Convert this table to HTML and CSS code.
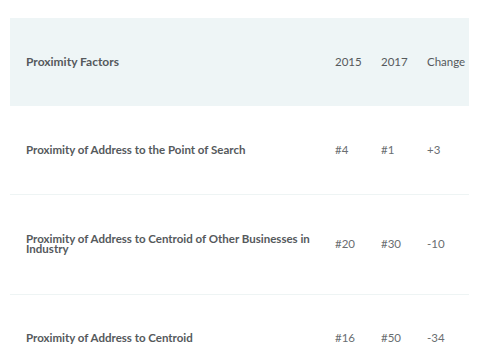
FILE: index.html
```html
<!DOCTYPE html>
<html>
<head>
<meta charset="utf-8">
<link rel="stylesheet" href="styles.css">
</head>
<body>
<table class="factors">
  <colgroup>
    <col class="c-name">
    <col class="c-year">
    <col class="c-year">
    <col class="c-change">
  </colgroup>
  <thead>
    <tr class="head">
      <th class="name">Proximity Factors</th>
      <th>2015</th>
      <th>2017</th>
      <th>Change</th>
    </tr>
  </thead>
  <tbody>
    <tr class="row">
      <td class="name">Proximity of Address to the Point of Search</td>
      <td>#4</td>
      <td>#1</td>
      <td>+3</td>
    </tr>
    <tr class="row tall">
      <td class="name">Proximity of Address to Centroid of Other Businesses in Industry</td>
      <td>#20</td>
      <td>#30</td>
      <td>-10</td>
    </tr>
    <tr class="row">
      <td class="name">Proximity of Address to Centroid</td>
      <td>#16</td>
      <td>#50</td>
      <td>-34</td>
    </tr>
  </tbody>
</table>
</body>
</html>
```

FILE: styles.css
```css
html, body {
  margin: 0;
  padding: 0;
  background: #ffffff;
}
body {
  padding: 18px 0 0 10px;
  font-family: Lato, "Open Sans", sans-serif;
  color: #5b5f62;
}
.factors {
  border-collapse: collapse;
  width: 459px;
  table-layout: fixed;
  font-size: 11.5px;
}
.c-name { width: 309px; }
.c-year { width: 46px; }
.c-change { width: 58px; }
.factors th,
.factors td {
  padding: 0 0 0 16px;
  text-align: left;
  vertical-align: middle;
  line-height: 10px;
}
.head {
  background: #eef5f6;
  height: 88px;
}
.head th {
  font-weight: 400;
  color: #55595c;
}
.head th.name {
  font-weight: 700;
  font-size: 12px;
}
.row {
  height: 88px;
  border-bottom: 1px solid #eef4f4;
}
.row.tall {
  height: 100px;
}
.row td {
  font-weight: 400;
  color: #6a6e71;
}
.row td.name {
  font-weight: 700;
  color: #55595c;
}
```
